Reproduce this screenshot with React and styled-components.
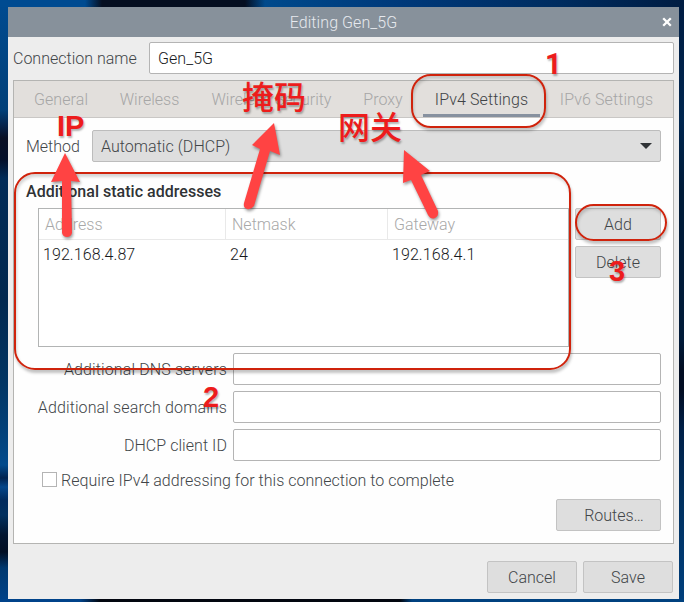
import React from "react";
import styled, { createGlobalStyle, css } from "styled-components";

const GlobalStyle = createGlobalStyle`
  *, *::before, *::after { box-sizing: border-box; }
  body { margin: 0; overflow: hidden; font-family: Roboto, "Liberation Sans", sans-serif; }
`;

const Desktop = styled.div`
  position: relative;
  width: 684px;
  height: 602px;
  padding: 7px 5px 3px 8px;
  overflow: hidden;
  background:
    linear-gradient(90deg, #00438a 0 80px, #02060f 100px 400px, #00417f 412px 100%) 0 599px / 684px 3px no-repeat,
    linear-gradient(90deg, #004b91 0, #004b91 85px, #050e20 102px, #050e20 245px, #004a8c 265px, #00397a 400px, #002c5f 560px, #001c42 684px) 0 0 / 684px 7px no-repeat,
    linear-gradient(180deg, #001c42 0, #00264f 120px, #001b38 190px, #001a38 340px, #020d22 370px, #020d22 390px, #002048 430px, #00305f 500px, #003f7c 602px) 679px 0 / 5px 602px no-repeat,
    linear-gradient(180deg, #004b91 0, #003f78 110px, #06234a 126px, #0a1024 138px, #04102a 160px, #012b57 178px, #01284f 300px, #013462 380px, #014078 430px, #014a8c 465px, #01234f 478px, #04468a 487px, #012a5c 500px, #01305f 515px, #02152f 535px, #020f24 552px, #00386f 568px, #00438a 602px) 0 0 / 8px 602px no-repeat,
    #003566;
`;

const Dialog = styled.main`
  display: flex;
  flex-direction: column;
  width: 671px;
  height: 592px;
  background: #ededed;
  color: #414548;
  font-size: 16px;
  font-weight: 300;
  line-height: 20px;
`;

const TitleBar = styled.header`
  display: grid;
  grid-template-columns: 24px 1fr 24px;
  align-items: center;
  height: 30px;
  padding-top: 1px;
  background: #87919b;
  color: #e6e9ee;
  text-align: center;
`;

const CloseIcon = styled.svg`
  grid-column: 3;
  width: 10px;
  height: 10px;
  margin: -1px 0 0 7px;
`;

const Text = styled.span`
  padding-top: ${(p) => p.$drop || 0}px;
  white-space: nowrap;
  letter-spacing: ${(p) => p.$track || 0}px;
`;

const Title = styled(Text)`
  grid-column: 2;
`;

const NameRow = styled.label`
  display: flex;
  align-items: center;
  justify-content: space-between;
  height: 32px;
  margin: 5px 5px 6px;
`;

const Field = styled.div`
  display: flex;
  align-items: center;
  width: ${(p) => p.$width}px;
  height: 32px;
  padding: 2px 0 0 8px;
  border: 1px solid #b4b4b4;
  border-radius: 2px;
  background: #fff;
  color: #17191b;
`;

const Notebook = styled.section`
  display: flex;
  flex-direction: column;
  width: 661px;
  height: 464px;
  margin-left: 5px;
  border: 1px solid #b4b4b2;
  background: #fefefe;
`;

const Tabs = styled.nav`
  display: flex;
  height: 37px;
  padding-left: 8px;
  border-bottom: 1px solid #c9c7c5;
  background: #e2dfdc;
`;

const Tab = styled.div`
  display: flex;
  align-items: center;
  justify-content: center;
  flex: none;
  width: ${(p) => p.$width}px;
  padding-top: 1px;
  color: ${(p) => (p.$active ? "#3f4346" : "#a6a6a6")};
  ${(p) =>
    p.$active &&
    css`
      margin-left: 1px;
      padding-top: 4px;
      border-bottom: 3px solid #87919f;
    `}
`;

const Page = styled.div`
  display: flex;
  flex-direction: column;
  padding: 12px 12px 0;
`;

const MethodRow = styled.div`
  display: flex;
  align-items: center;
  justify-content: space-between;
  height: 32px;
`;

const Select = styled.div`
  display: flex;
  align-items: center;
  justify-content: space-between;
  width: 569px;
  height: 32px;
  padding: 0 8px;
  border: 1px solid #bcbcbc;
  border-radius: 2px;
  background: #dedede;
`;

const Heading = styled.h2`
  margin: 20px 0 6px;
  color: #2f3235;
  font-size: 16px;
  font-weight: 500;
  line-height: 20px;
`;

const AddressArea = styled.div`
  display: flex;
  gap: 6px;
  padding-left: 12px;
`;

const Table = styled.div`
  width: 531px;
  height: 139px;
  border: 1px solid #b2b4b4;
  background: #fff;
`;

const Row = styled.div`
  display: grid;
  grid-template-columns: 187px 162px 1fr;
  height: ${(p) => (p.$head ? 31 : 30)}px;
  color: ${(p) => (p.$head ? "#a8a8a8" : "#17191b")};
  border-bottom: ${(p) => (p.$head ? "1px solid #e9e9e9" : 0)};
`;

const Cell = styled.div`
  display: flex;
  align-items: center;
  padding: ${(p) => (p.$head ? "1px 0 0 6px" : "0 0 0 4px")};
  letter-spacing: ${(p) => (p.$head ? 0 : 0.08)}px;
  border-right: ${(p) => (p.$head ? "1px solid #e9e9e9" : 0)};
  &:last-child { border-right: 0; }
`;

const ButtonStack = styled.div`
  display: flex;
  flex-direction: column;
  gap: 6px;
`;

const Button = styled.button`
  display: flex;
  align-items: center;
  justify-content: center;
  width: ${(p) => p.$width}px;
  height: 32px;
  padding: 2px 0 0 ${(p) => p.$indent || 0}px;
  border: 1px solid #c3c3c3;
  border-radius: 2px;
  background: #dedede;
  color: #414548;
  font: inherit;
`;

const Fields = styled.div`
  display: flex;
  flex-direction: column;
  gap: 6px;
  margin-top: 6px;
`;

const FieldRow = styled.div`
  display: flex;
  align-items: center;
  justify-content: flex-end;
  gap: 6px;
`;

const CheckRow = styled.label`
  display: flex;
  align-items: center;
  gap: 4px;
  height: 20px;
  margin: 9px 0 9px 16px;
`;

const CheckBox = styled.span`
  width: 15px;
  height: 15px;
  margin-top: -1px;
  border: 1px solid #b4b4b4;
  background: #fff;
`;

const Actions = styled.div`
  display: flex;
  justify-content: flex-end;
  gap: 6px;
  padding-right: ${(p) => p.$edge || 0}px;
  margin-top: ${(p) => p.$top || 0}px;
`;

const Overlay = styled.div`
  position: absolute;
  inset: 0;
  pointer-events: none;
`;

const Arrows = styled.svg`
  position: absolute;
  inset: 0;
  filter: drop-shadow(1px 2px 1.5px rgba(0, 0, 0, 0.4));
`;

const Ring = styled.div`
  position: absolute;
  left: ${(p) => p.$x}px;
  top: ${(p) => p.$y}px;
  width: ${(p) => p.$w}px;
  height: ${(p) => p.$h}px;
  border: 2px solid #cf230c;
  border-radius: ${(p) => p.$r}px;
  box-shadow: 1px 3px 3px rgba(0, 0, 0, 0.24), inset 1px 3px 3px rgba(0, 0, 0, 0.16);
`;

const noteFonts = {
  latin: '700 29px/32px "Liberation Sans"',
  digit: '700 29px/32px Roboto',
  cjk: '500 32px/36px "Noto Sans CJK SC"',
};

const Note = styled.span`
  position: absolute;
  left: ${(p) => p.$x}px;
  top: ${(p) => p.$y}px;
  color: #ed1c1c;
  font: ${(p) => noteFonts[p.$face || "latin"]}, sans-serif;
  text-shadow: 1px 2px 2px rgba(0, 0, 0, 0.3);
  white-space: nowrap;
`;

const tabs = [
  { label: "General", width: 78, track: 0.1 },
  { label: "Wireless", width: 99 },
  { label: "Wireless Security", width: 145 },
  { label: "Proxy", width: 78 },
  { label: "IPv4 Settings", width: 117, track: 0.1, active: true },
  { label: "IPv6 Settings", width: 133, track: 0.1 },
];

const fields = [
  { label: "Additional DNS servers", track: 0.12 },
  { label: "Additional search domains", track: 0.12 },
  { label: "DHCP client ID", track: 0.06 },
];

export default function App() {
  return (
    <>
      <GlobalStyle />
      <Desktop>
        <Dialog>
          <TitleBar>
            <Title $track={0.08}>Editing Gen_5G</Title>
            <CloseIcon viewBox="0 0 10 10">
              <path d="M1.2 1.2 8.8 8.8M8.8 1.2 1.2 8.8" stroke="#fff" strokeWidth="2.3" />
            </CloseIcon>
          </TitleBar>
          <NameRow>
            <Text $drop={2}>Connection name</Text>
            <Field $width={525}>
              <Text $track={0.06}>Gen_5G</Text>
            </Field>
          </NameRow>
          <Notebook>
            <Tabs>
              {tabs.map((t) => (
                <Tab key={t.label} $width={t.width} $active={t.active}>
                  <Text $track={t.track}>{t.label}</Text>
                </Tab>
              ))}
            </Tabs>
            <Page>
              <MethodRow>
                <Text $drop={2}>Method</Text>
                <Select>
                  <Text $drop={2} $track={0.04}>Automatic (DHCP)</Text>
                  <svg width="12" height="6" viewBox="0 0 12 6">
                    <path d="M0 0H12L6 6Z" fill="#303336" />
                  </svg>
                </Select>
              </MethodRow>
              <Heading>
                <Text $track={0.02}>Additional static addresses</Text>
              </Heading>
              <AddressArea>
                <Table>
                  <Row $head>
                    <Cell $head>Address</Cell>
                    <Cell $head>Netmask</Cell>
                    <Cell $head>Gateway</Cell>
                  </Row>
                  <Row>
                    <Cell>192.168.4.87</Cell>
                    <Cell>24</Cell>
                    <Cell>192.168.4.1</Cell>
                  </Row>
                </Table>
                <ButtonStack>
                  <Button $width={86}>Add</Button>
                  <Button $width={86}>Delete</Button>
                </ButtonStack>
              </AddressArea>
              <Fields>
                {fields.map((f) => (
                  <FieldRow key={f.label}>
                    <Text $drop={2} $track={f.track}>{f.label}</Text>
                    <Field $width={428} />
                  </FieldRow>
                ))}
              </Fields>
              <CheckRow>
                <CheckBox />
                <Text $drop={2} $track={0.03}>Require IPv4 addressing for this connection to complete</Text>
              </CheckRow>
              <Actions>
                <Button $width={105} $indent={11}>Routes…</Button>
              </Actions>
            </Page>
          </Notebook>
          <Actions $edge={6} $top={17}>
            <Button $width={90}>Cancel</Button>
            <Button $width={90}>Save</Button>
          </Actions>
        </Dialog>
        <Overlay>
          <Ring $x={411} $y={74} $w={135} $h={54} $r={20} />
          <Ring $x={14} $y={172} $w={557} $h={198} $r={21} />
          <Ring $x={575} $y={204} $w={92} $h={37} $r={19} />
          <Arrows width="684" height="602" viewBox="0 0 684 602" fill="#ff4343">
            <path d="M65 153 80 182 71 181 72 233Q71 237 67 237T62 233L62 181 51 182Z" />
            <path d="M274 123 280 155 270 151 254 206Q251 210 247 209T244 203L260 149 252 145Z" />
            <path d="M404 150 430 171 421 175 438 211Q439 216 435 218T428 215L411 180 403 183Z" />
          </Arrows>
          <Note $x={57} $y={110}>IP</Note>
          <Note $face="digit" $x={545} $y={48}>1</Note>
          <Note $x={203} $y={381}>2</Note>
          <Note $x={609} $y={255}>3</Note>
          <Note $face="cjk" $x={242} $y={77}>掩码</Note>
          <Note $face="cjk" $x={338} $y={107}>网关</Note>
        </Overlay>
      </Desktop>
    </>
  );
}
